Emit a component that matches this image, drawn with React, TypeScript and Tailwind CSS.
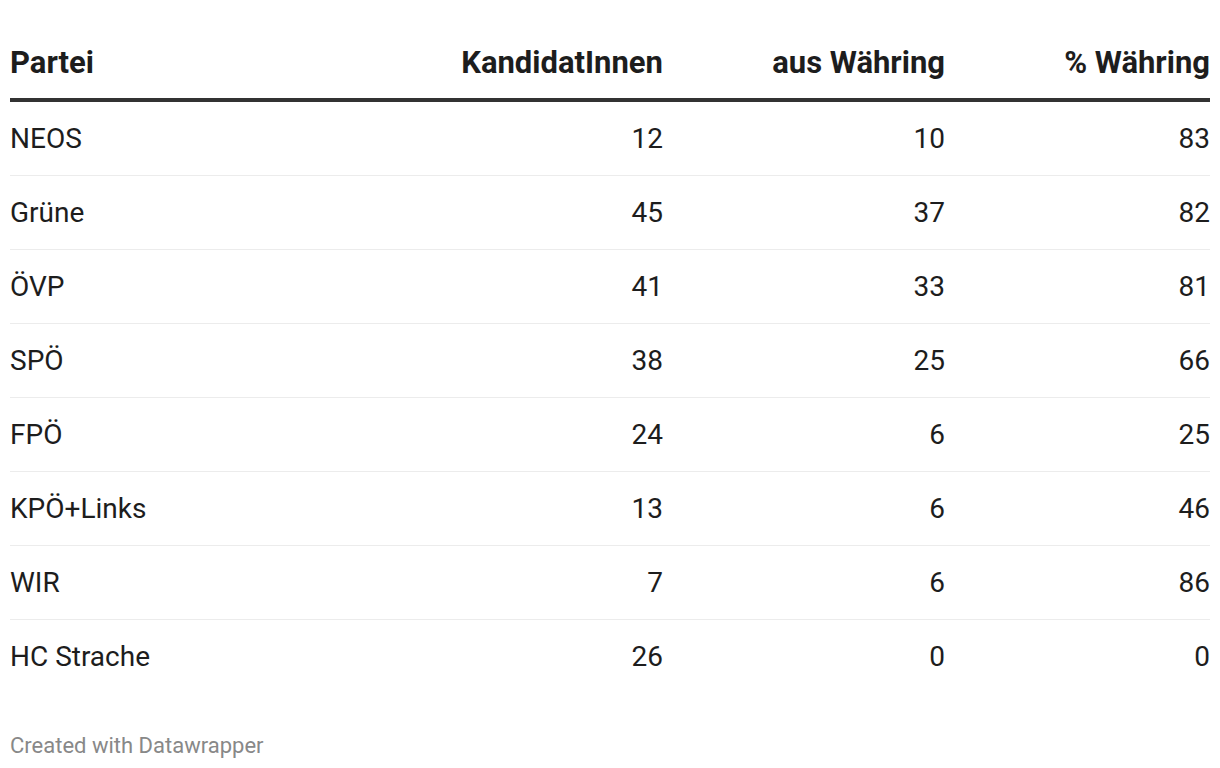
import React from "react";

const rows: [string, number, number, number][] = [
  ["NEOS", 12, 10, 83],
  ["Grüne", 45, 37, 82],
  ["ÖVP", 41, 33, 81],
  ["SPÖ", 38, 25, 66],
  ["FPÖ", 24, 6, 25],
  ["KPÖ+Links", 13, 6, 46],
  ["WIR", 7, 6, 86],
  ["HC Strache", 26, 0, 0],
];

const App: React.FC = () => {
  return (
    <div className="w-[1220px] h-[768px] bg-white px-[10px] font-['Roboto',sans-serif] text-[#1d1d1d]">
      {/* header */}
      <div className="grid grid-cols-[minmax(0,1fr)_300px_282px_265px] pt-[45px] pb-[17px] border-b-4 border-[#333333] text-[31px] leading-[36px] font-bold">
        <div>Partei</div>
        <div className="text-right">KandidatInnen</div>
        <div className="text-right">aus Währing</div>
        <div className="text-right">% Währing</div>
      </div>

      {/* body */}
      {rows.map(([name, a, b, c], i) => (
        <div
          key={name}
          className={
            "grid grid-cols-[minmax(0,1fr)_300px_282px_265px] h-[74px] items-center text-[28px] leading-[34px] " +
            (i < rows.length - 1 ? "border-b border-[#ececec]" : "")
          }
        >
          <div>{name}</div>
          <div className="text-right">{a}</div>
          <div className="text-right">{b}</div>
          <div className="text-right">{c}</div>
        </div>
      ))}

      {/* footer */}
      <div className="pt-[39px] text-[22px] leading-[26px] text-[#888888]">Created with Datawrapper</div>
    </div>
  );
};

export default App;
